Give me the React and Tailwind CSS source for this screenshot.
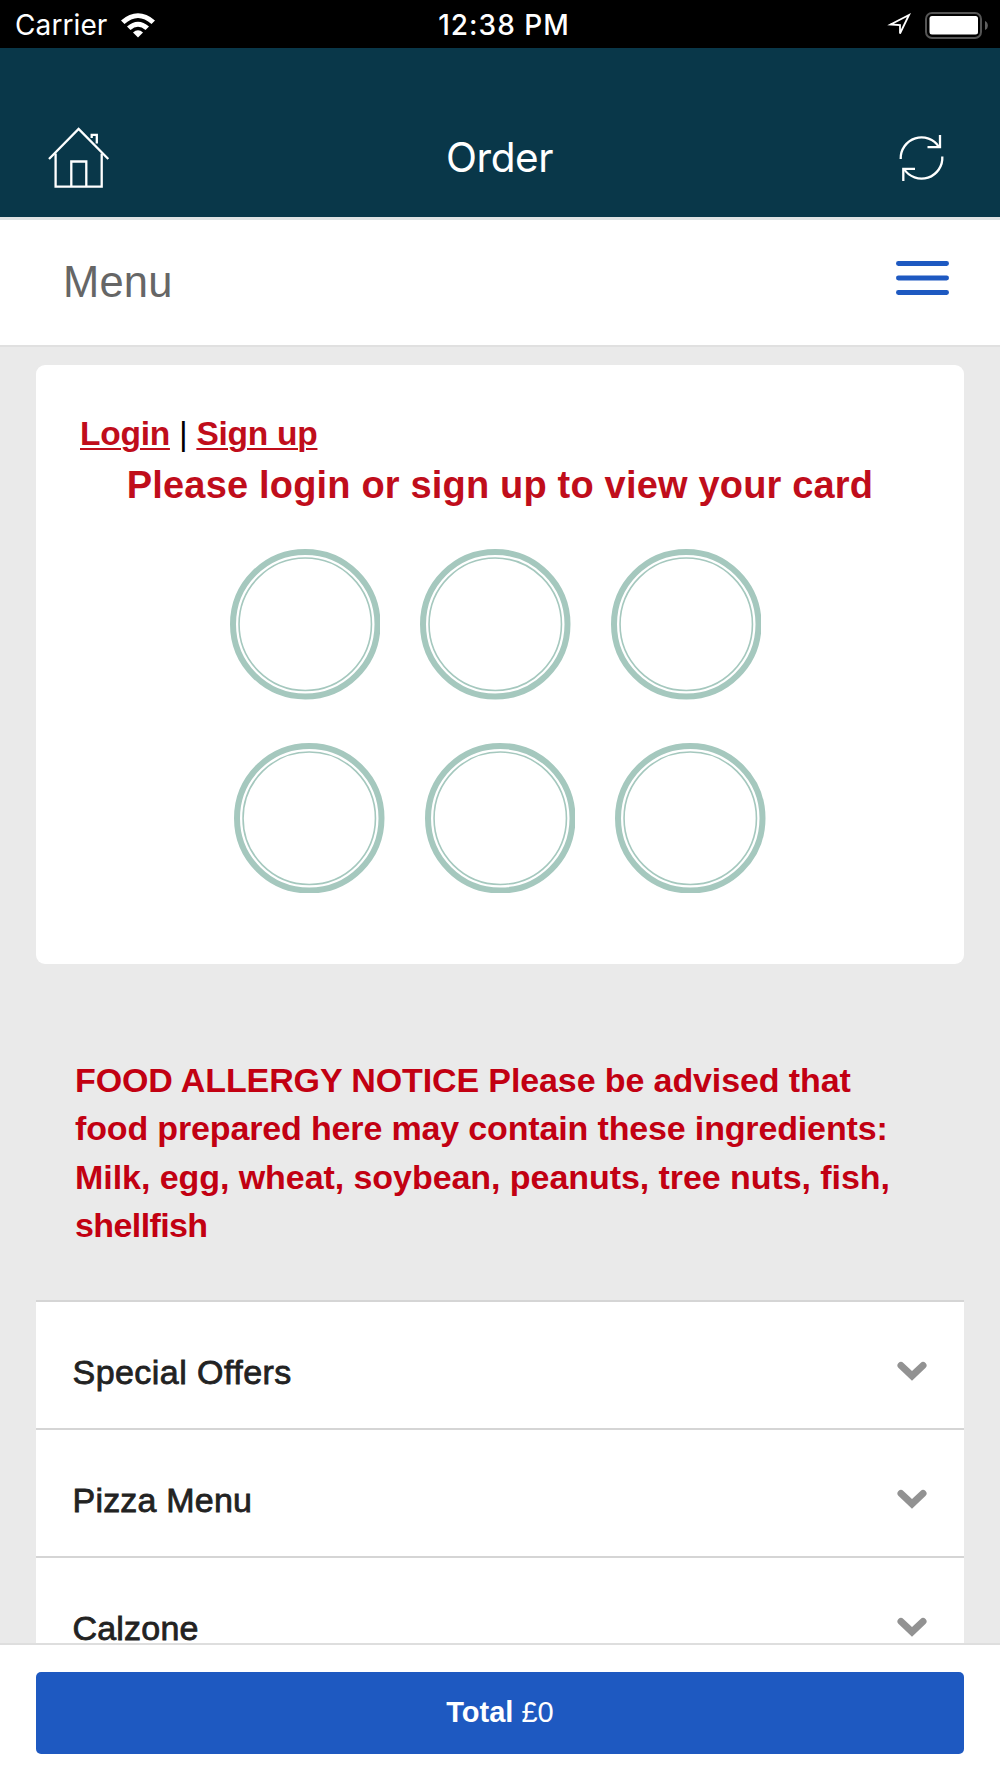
import React from "react";

const categories = [
    { name: "Special Offers", className: "tracking-[0.45px]" },
    { name: "Pizza Menu", className: "tracking-[0.2px]" },
    { name: "Calzone", className: "tracking-[0.2px]" },
];

const stampRows = [
    { id: "top", className: "flex gap-[40px] ml-[193.7px] mt-[40px]" },
    { id: "bottom", className: "flex gap-[40px] ml-[198px] mt-[43px]" },
];

export default function App() {
    return (
        <div className="flex flex-col w-[1000px] h-[1778px] overflow-hidden bg-[#eaeaea] font-['Liberation_Sans',sans-serif]">
            <StatusBar />
            <header className="flex items-center justify-between shrink-0 h-[172px] pt-[50px] pl-[48px] pr-[56px] bg-[#093749] border-b-[3px] border-[#dfe2e3] text-white">
                <HomeIcon />
                <h1 className="mr-[9px] text-[40.5px] leading-[48px] tracking-[-0.4px] font-['Inter',sans-serif]">Order</h1>
                <RefreshIcon />
            </header>
            <nav className="flex items-center justify-between shrink-0 h-[127px] pl-[63px] pr-[51px] pb-[2px] bg-white border-b-2 border-[#e0e0e0]">
                <span className="text-[43.5px] leading-[48px] tracking-[0.2px] text-[#666]">Menu</span>
                <MenuIcon />
            </nav>

            <main className="flex flex-col flex-1 min-h-0 overflow-hidden px-[36px] pt-[18px]">
                <LoyaltyCard />
                <p className="shrink-0 mt-[92px] pl-[39px] h-[244px] text-[34px] leading-[48.4px] font-bold text-[#c20012] whitespace-nowrap">
                    <span className="block tracking-[-0.11px]">FOOD ALLERGY NOTICE Please be advised that</span>
                    <span className="block tracking-[-0.15px]">food prepared here may contain these ingredients:</span>
                    <span className="block tracking-[-0.06px]">Milk, egg, wheat, soybean, peanuts, tree nuts, fish,</span>
                    <span className="block tracking-[-0.6px]">shellfish</span>
                </p>
                <ul className="shrink-0">
                    {categories.map((category) => (
                        <li
                            key={category.name}
                            className="flex items-center justify-between h-[128px] pl-[36.5px] pr-[37px] pt-[14px] bg-white border-t-2 border-[#d5d5d5] text-[34px] text-[#222] [-webkit-text-stroke:0.8px_#222]"
                        >
                            <span className={category.className}>{category.name}</span>
                            <ChevronIcon />
                        </li>
                    ))}
                </ul>
            </main>

            <footer className="shrink-0 h-[135px] px-[36px] pt-[26.5px] bg-white border-t-2 border-[#dedede]">
                <button className="flex items-center justify-center w-full h-[82px] rounded-[5px] bg-[#1e59c1] text-white text-[29px]">
                    <span className="whitespace-pre"><b>Total</b> £0</span>
                </button>
            </footer>
        </div>
    );
}

function StatusBar() {
    return (
        <div className="grid grid-cols-3 items-center shrink-0 h-[48px] pt-[2px] pl-[15px] pr-[12px] bg-black text-white text-[28px] font-['Inter',sans-serif]">
            <div className="flex items-center gap-[14px]">
                <span className="tracking-[0.1px]">Carrier</span>
                <WifiIcon />
            </div>
            <span className="pl-[5px] text-center font-medium tracking-[1px] whitespace-nowrap">12:38 PM</span>
            <div className="flex items-center justify-end gap-[14px]">
                <LocationIcon />
                <BatteryIcon />
            </div>
        </div>
    );
}

function LoyaltyCard() {
    return (
        <section className="shrink-0 h-[599px] pt-[49px] bg-white rounded-[9px]">
            <div className="flex gap-[9px] pl-[44px] text-[33.5px] leading-[40px] tracking-[-0.25px] font-bold text-[#c00d1b]">
                <a className="underline decoration-2 underline-offset-[3px]">Login</a>
                <span className="font-normal text-black">|</span>
                <a className="underline decoration-2 underline-offset-[3px]">Sign up</a>
            </div>
            <h2 className="mt-[7px] text-center text-[38px] leading-[48px] tracking-[0.18px] font-bold text-[#c00d1b] whitespace-nowrap">
                Please login or sign up to view your card
            </h2>
            {stampRows.map((row) => (
                <div key={row.id} className={row.className}>
                    <Stamp />
                    <Stamp />
                    <Stamp />
                </div>
            ))}
        </section>
    );
}

function Stamp() {
    return (
        <svg width="150.5" height="150.5" viewBox="0 0 150.5 150.5" fill="none" stroke="#a5c8be">
            <circle cx="75.25" cy="75.25" r="72.25" strokeWidth="6" />
            <circle cx="75.25" cy="75.25" r="66.2" strokeWidth="1.6" />
        </svg>
    );
}

function HomeIcon() {
    return (
        <svg width="62" height="64" viewBox="0 0 62 64" fill="none" stroke="#fff" strokeWidth="2.3">
            <path d="M1 33 30.600 3 60.300 33" />
            <path d="M7.600 27.500V60.700H53.700V27.500" />
            <path d="M23.300 60V35.500H38.300V60" />
            <path d="M43.700 12V8.800H48.800V17.500" />
        </svg>
    );
}

function RefreshIcon() {
    return (
        <svg width="46" height="48" viewBox="0 0 46 48" fill="none" stroke="#fff" strokeWidth="2.3">
            <path d="M2.700 25A20.800 20.800 0 0 1 41 13" />
            <path d="M42 1V13.200H29.500" />
            <path d="M44.300 22.500A20.800 20.800 0 0 1 6 35" />
            <path d="M5.300 47V34.800H17" />
        </svg>
    );
}

function MenuIcon() {
    return (
        <svg width="53" height="34" viewBox="0 0 53 34" className="mb-[8px]" stroke="#1e59c1" strokeWidth="4.800" strokeLinecap="round">
            <path d="M2.400 2.500H50.600M2.400 17H50.600M2.400 31.500H50.600" />
        </svg>
    );
}

function ChevronIcon() {
    return (
        <svg width="30" height="20" viewBox="0 0 30 20" className="mb-[2px]" fill="none" stroke="#929292" strokeWidth="7" strokeLinecap="round">
            <path d="M4 4.500 15 14.900 26 4.500" />
        </svg>
    );
}

function WifiIcon() {
    return (
        <svg width="34" height="25" viewBox="0 0 34 25" fill="#fff">
            <path d="M17 24.500 12 19.500Q17 15 22 19.500Z" />
            <path d="M6 13.500Q17 4 28 13.500L24.500 17Q17 10.500 9.500 17Z" />
            <path d="M0 7.500Q17-6.800 34 7.500L30.500 11Q17-1 3.500 11Z" />
        </svg>
    );
}

function LocationIcon() {
    return (
        <svg width="24" height="24" viewBox="0 0 24 24" fill="none" stroke="#fff" strokeWidth="1.800">
            <path d="M3.500 11.500 22 2 13 20.500V12.200Z" />
        </svg>
    );
}

function BatteryIcon() {
    return (
        <svg width="63" height="27" viewBox="0 0 63 27" fill="none">
            <rect x="1" y="1" width="55" height="25" rx="6" stroke="#555" strokeWidth="2" />
            <rect x="4.500" y="4" width="48.500" height="18.500" rx="2.500" fill="#fff" />
            <path d="M60 9V18Q62.800 17 62.800 13.500T60 9Z" fill="#606060" />
        </svg>
    );
}
